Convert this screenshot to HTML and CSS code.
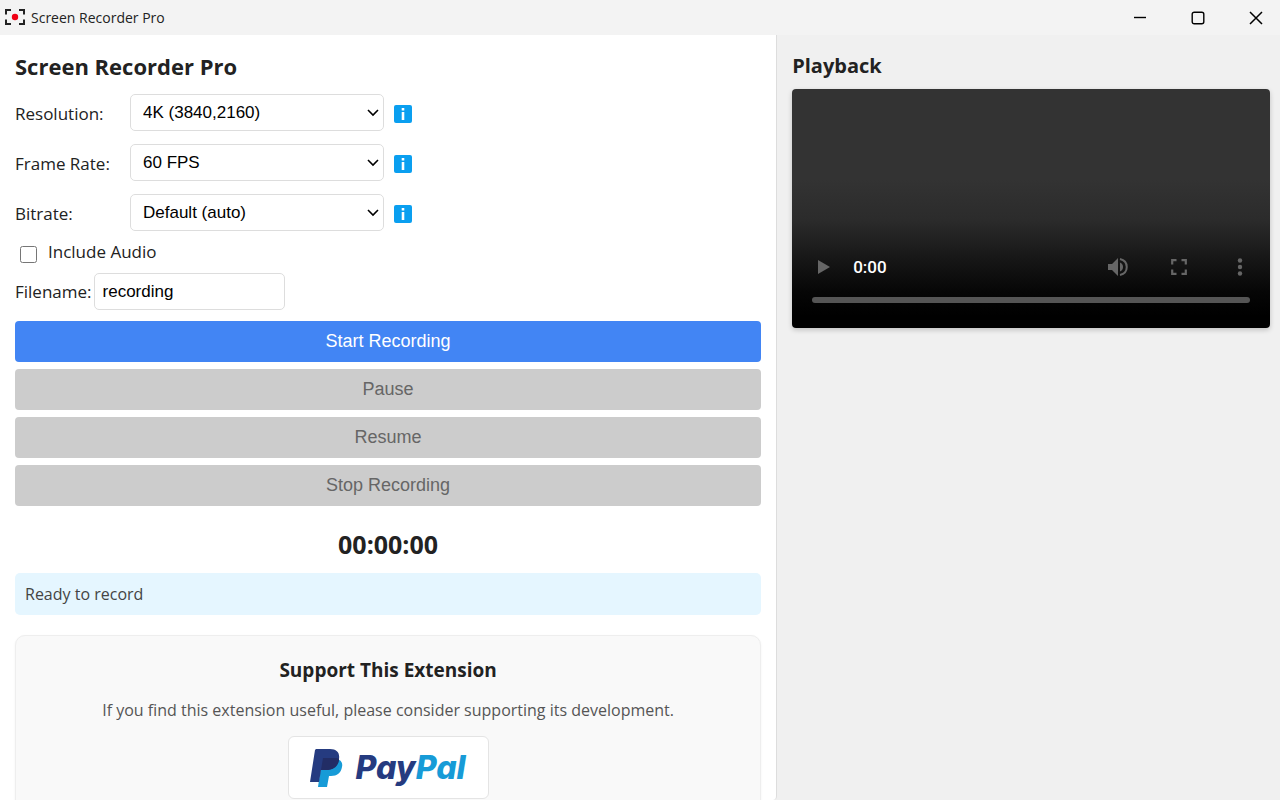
FILE: index.html
```html
<!DOCTYPE html>
<html lang="en">
  <head>
    <meta charset="utf-8">
    <title>Screen Recorder Pro</title>
    <link rel="stylesheet" href="styles.css">
  </head>
  <body>
    <header class="titlebar">
      <svg class="app-icon" width="20" height="18" viewBox="0 0 20 18" fill="none" stroke="#222" stroke-width="2">
        <path d="M1 6.500V2h5M14 2h5v4.500M19 11.500v4.500h-5M6 16H1v-4.500"/>
        <circle cx="10" cy="9" r="3.200" fill="#f00014" stroke="none"/>
      </svg>
      <span class="app-name">Screen Recorder Pro</span>
      <div class="window-btns">
        <button class="window-btn" aria-label="Minimize">
          <svg width="14" height="14" viewBox="0 0 14 14" fill="none" stroke="#000" stroke-width="1.4"><path d="M1 6.5h12"/></svg>
        </button>
        <button class="window-btn" aria-label="Maximize">
          <svg width="14" height="14" viewBox="0 0 14 14" fill="none" stroke="#000" stroke-width="1.4"><rect x="1.2" y="1.2" width="11.6" height="11.6" rx="2"/></svg>
        </button>
        <button class="window-btn" aria-label="Close">
          <svg width="14" height="14" viewBox="0 0 14 14" fill="none" stroke="#000" stroke-width="1.5"><path d="M1 1l12 12M13 1L1 13"/></svg>
        </button>
      </div>
    </header>

    <div class="container">
      <main class="controls">
        <h1 class="title">Screen Recorder Pro</h1>

        <div class="setting">
          <label for="resolution">Resolution:</label>
          <select id="resolution">
            <option>4K (3840,2160)</option>
          </select>
          <svg class="info" width="18" height="18" viewBox="0 0 18 18">
            <rect width="18" height="18" rx="2" fill="#0a9ff0"/>
            <path d="M7.7 3h2.6v2.4H7.7zM7.7 7h2.6v8H7.7z" fill="#fff"/>
          </svg>
        </div>
        <div class="setting">
          <label for="frame-rate">Frame Rate:</label>
          <select id="frame-rate">
            <option>60 FPS</option>
          </select>
          <svg class="info" width="18" height="18" viewBox="0 0 18 18">
            <rect width="18" height="18" rx="2" fill="#0a9ff0"/>
            <path d="M7.7 3h2.6v2.4H7.7zM7.7 7h2.6v8H7.7z" fill="#fff"/>
          </svg>
        </div>
        <div class="setting">
          <label for="bitrate">Bitrate:</label>
          <select id="bitrate">
            <option>Default (auto)</option>
          </select>
          <svg class="info" width="18" height="18" viewBox="0 0 18 18">
            <rect width="18" height="18" rx="2" fill="#0a9ff0"/>
            <path d="M7.7 3h2.6v2.4H7.7zM7.7 7h2.6v8H7.7z" fill="#fff"/>
          </svg>
        </div>

        <div class="audio">
          <input id="include-audio" type="checkbox">
          <label for="include-audio">Include Audio</label>
        </div>
        <div class="filename">
          <label for="filename">Filename:</label>
          <input id="filename" type="text" value="recording">
        </div>

        <div class="btn-group">
          <button class="btn" id="start-btn">Start Recording</button>
          <button class="btn" id="pause-btn" disabled>Pause</button>
          <button class="btn" id="resume-btn" disabled>Resume</button>
          <button class="btn" id="stop-btn" disabled>Stop Recording</button>
        </div>

        <div class="timer">00:00:00</div>
        <div class="status">Ready to record</div>

        <section class="support">
          <h2 class="support-title">Support This Extension</h2>
          <p class="support-text">If you find this extension useful, please consider supporting its development.</p>
          <a class="paypal" href="#">
            <svg width="33" height="38" viewBox="0 0 33 38">
              <path d="M12 10h15c4 1 6 4 5 8-1 6-5 9-11 9h-2l-2 11H8z" fill="#179bd7"/>
              <path d="M6 0h14c7 0 10 4 9 10-1 7-6 11-13 11h-5L9 33H0L5 1z" fill="#253b80"/>
              <path d="M13 9h13c1 0 2 .4 3 1v1c-1 7-6 10-13 10h-5z" fill="#222d65"/>
            </svg>
            <span class="paypal-name"><span class="pay">Pay</span><span class="pal">Pal</span></span>
          </a>
        </section>
      </main>

      <aside class="playback">
        <h2 class="playback-title">Playback</h2>
        <div class="player">
          <div class="player-bar">
            <button class="player-btn play" aria-label="Play">
              <svg width="12" height="16" viewBox="0 0 12 16" fill="#666"><path d="M0 1l12 7-12 7z"/></svg>
            </button>
            <span class="time">0:00</span>
            <button class="player-btn" aria-label="Mute">
              <svg width="22" height="20" viewBox="0 0 22 20" fill="none" stroke="#666" stroke-width="2">
                <path d="M1 7h4l6-6v18l-6-6H1z" fill="#666" stroke="none"/>
                <path d="M13 5.500c4 1.500 4 7.500 0 9z" fill="#666" stroke="none"/>
                <path d="M13 2c9 2 9 14 0 16"/>
              </svg>
            </button>
            <button class="player-btn" aria-label="Fullscreen">
              <svg width="16" height="16" viewBox="0 0 16 16" fill="none" stroke="#666" stroke-width="2.200"><path d="M1.200 5.500V1.200h4.300M10.500 1.200h4.300v4.300M14.800 10.500v4.300h-4.300M5.500 14.800H1.200v-4.300"/></svg>
            </button>
            <button class="player-btn" aria-label="More options">
              <svg width="6" height="18" viewBox="0 0 6 18" fill="#666"><circle cx="3" cy="2.500" r="2.200"/><circle cx="3" cy="9" r="2.200"/><circle cx="3" cy="15.500" r="2.200"/></svg>
            </button>
          </div>
          <div class="timeline"></div>
        </div>
      </aside>
    </div>
  </body>
</html>
```

FILE: styles.css
```css
* {
  box-sizing: border-box;
}

body {
  display: flex;
  flex-direction: column;
  height: 100vh;
  margin: 0;
  overflow: hidden;
  background: #f0f0f0;
  color: #222;
  font: 17px/24px "Segoe UI", "Open Sans", "Noto Sans", sans-serif;
}

h1, h2, p {
  margin: 0;
}

button, input, select {
  font-family: Arial, "Liberation Sans", sans-serif;
}

.titlebar {
  display: flex;
  align-items: center;
  flex: none;
  height: 35px;
  padding-left: 5px;
  background: #f3f3f3;
}

.app-icon {
  margin-bottom: 2px;
}

.app-name {
  margin-left: 6px;
  font-size: 14px;
}

.window-btns {
  display: flex;
  margin-left: auto;
}

.window-btn {
  display: flex;
  align-items: center;
  justify-content: center;
  width: 58px;
  height: 35px;
  padding: 0 0 0 10px;
  border: 0;
  background: none;
}

.container {
  display: grid;
  grid-template-columns: 17fr 11fr;
  flex: 1;
  min-height: 0;
}

.controls {
  padding: 15px;
  overflow: hidden;
  border-right: 1px solid #ddd;
  border-bottom-right-radius: 4px;
  background: #fff;
}

.title {
  margin-bottom: 12px;
  font-size: 22px;
  line-height: 32px;
}

.setting {
  display: flex;
  align-items: center;
  margin-bottom: 13px;
}

.setting label {
  width: 115px;
  padding-top: 2px;
}

.setting select {
  width: 254px;
  height: 37px;
  padding: 0 12px;
  border: 1px solid #ddd;
  border-radius: 5px;
  appearance: none;
  background: #fff url("data:image/svg+xml,%3Csvg xmlns='http://www.w3.org/2000/svg' width='12' height='8' fill='none' stroke='black' stroke-width='1.6'%3E%3Cpath d='M1 1l5 5 5-5'/%3E%3C/svg%3E") no-repeat right 4px center;
  color: #000;
  font-size: 17px;
}

.info {
  margin: 2px 0 0 10px;
}

.audio {
  display: flex;
  align-items: center;
  height: 24px;
  margin: -4px 0 9px;
}

.audio input {
  width: 17px;
  height: 17px;
  margin: 4px 11px 0 5px;
}

.filename {
  display: flex;
  align-items: center;
  margin-bottom: 10px;
}

.filename input {
  width: 191px;
  height: 37px;
  margin-left: 2px;
  padding: 0 8px;
  border: 1px solid #ddd;
  border-radius: 5px;
  color: #000;
  font-size: 17px;
}

.btn-group {
  display: flex;
  flex-direction: column;
  gap: 7px;
  padding-top: 1px;
}

.btn {
  height: 41px;
  border: 0;
  border-radius: 4px;
  background: #4285f4;
  color: #fff;
  font-size: 18px;
}

.btn:disabled {
  background: #ccc;
  color: #666;
}

.timer {
  margin: 22px 0 13px;
  font-size: 25px;
  font-weight: bold;
  line-height: 32px;
  text-align: center;
}

.status {
  padding: 9px 10px;
  border-radius: 5px;
  background: #e5f6ff;
  color: #444;
  font-size: 16px;
}

.support {
  display: flex;
  flex-direction: column;
  align-items: center;
  margin-top: 20px;
  padding: 20px;
  border: 1px solid #eee;
  border-radius: 10px;
  background: #f9f9f9;
  box-shadow: 0 1px 3px rgba(0, 0, 0, 0.05);
}

.support-title {
  font-size: 19px;
  line-height: 28px;
}

.support-text {
  margin: 14px 0;
  color: #555;
  font-size: 16px;
}

.paypal {
  display: flex;
  align-items: center;
  justify-content: center;
  gap: 12px;
  width: 201px;
  height: 63px;
  border: 1px solid #e4e4e4;
  border-radius: 6px;
  background: #fff;
  text-decoration: none;
}

.paypal-name {
  font: italic 800 32px/40px Inter, sans-serif;
}

.pay {
  color: #253b80;
}

.pal {
  color: #179bd7;
}

.playback {
  padding: 15px 10px 15px 15px;
}

.playback-title {
  margin-bottom: 7px;
  font-size: 20px;
  line-height: 32px;
}

.player {
  display: flex;
  flex-direction: column;
  justify-content: flex-end;
  aspect-ratio: 2 / 1;
  padding: 0 20px 25px;
  border-radius: 4px;
  background: linear-gradient(#333 0, #333 38%, #2b2b2b 55%, #181818 70%, #060606 85%, #000 95%);
  box-shadow: 0 2px 5px rgba(0, 0, 0, 0.2);
}

.player-bar {
  display: flex;
  align-items: center;
  height: 32px;
  margin-bottom: 14px;
}

.player-btn {
  display: flex;
  align-items: center;
  justify-content: center;
  width: 61px;
  height: 32px;
  padding: 0;
  border: 0;
  background: none;
}

.player-btn.play {
  width: 23px;
}

.player-btn:last-child {
  margin-right: -20px;
}

.time {
  flex: 1;
  margin-left: 18px;
  color: #fff;
  font-family: Roboto, sans-serif;
  font-weight: 500;
}

.timeline {
  height: 6px;
  border-radius: 3px;
  background: #555;
}
```
